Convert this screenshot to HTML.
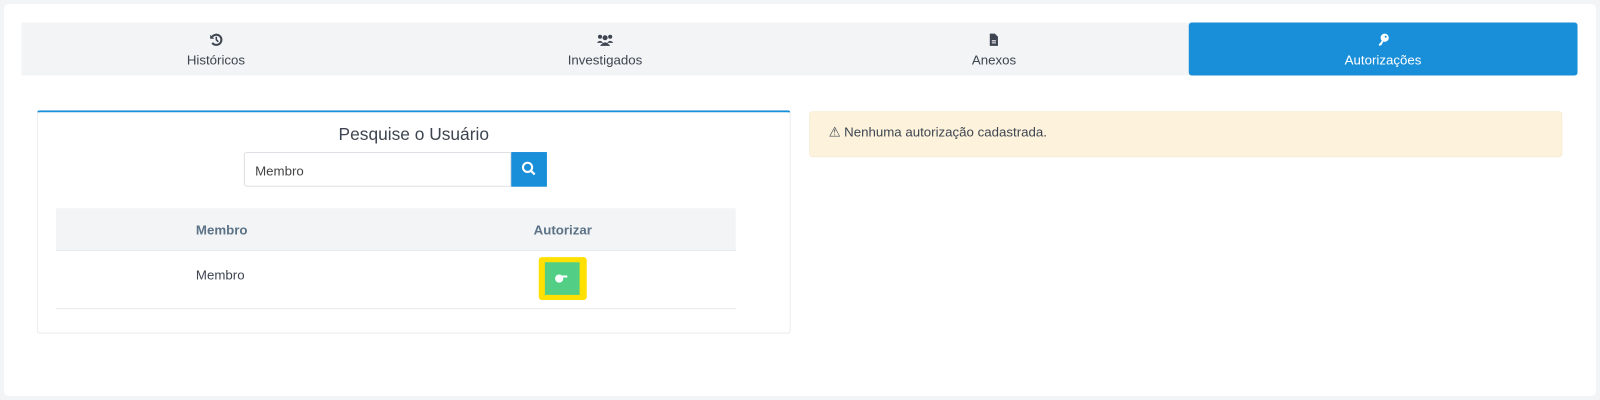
<!DOCTYPE html>
<html><head><meta charset="utf-8"><style>
*{box-sizing:border-box;margin:0;padding:0}
body{width:1600px;height:400px;background:#f3f4f6;font-family:"Liberation Sans",sans-serif;position:relative;overflow:hidden}
#w{position:absolute;left:0;top:0;width:1568px;height:392px;transform:scale(1.0204);transform-origin:0 0}
.card{position:absolute;left:4px;top:4px;width:1560px;height:384px;background:#fff;border-radius:4px}
.tabs{position:absolute;left:21px;top:22px;width:1525px;height:52px;background:#f3f4f6;display:flex}
.tab{flex:1;text-align:center;font-size:13px;color:#3d4550;padding-top:10px;border-radius:3px}
.tab svg{display:block;margin:0 auto 5px}
.tab.act{background:#1a8fd9;color:#fff}
.left{position:absolute;left:36px;top:108px;width:739px;height:219px;border:1px solid #e6e8eb;border-top:2px solid #1a8fd9;border-radius:3px}
h3{position:absolute;top:12px;width:100%;text-align:center;font-weight:normal;font-size:17px;color:#3d4550}
.inp{position:absolute;left:202px;top:39px;width:262px;height:34px;border:1px solid #dde0e4;border-radius:3px 0 0 3px;font-size:13px;color:#444;padding:10px 10px}
.btn{position:absolute;left:464px;top:39px;width:35px;height:34px;background:#1a8fd9}
.thead{position:absolute;left:18px;top:94px;width:666px;height:42px;background:#f3f4f6;border-bottom:1px solid #e6e8eb;font-size:13px;font-weight:bold;color:#5b7287}
.row{position:absolute;left:18px;top:136px;width:666px;height:57px;border-bottom:1px solid #e6e8eb;font-size:13px;color:#3d4550}
.alert{position:absolute;left:793px;top:109px;width:738px;height:45px;background:#fdf3dc;border:1px solid #f7ecd2;border-radius:3px;font-size:13px;color:#3d4550;padding:12px 18px}
</style></head><body><div id="w">
<div class="card"></div>
<div class="tabs">
<div class="tab"><svg width="14" height="14" viewBox="0 0 14 14"><path d="M3 4A5 5 0 1 1 3 10" fill="none" stroke="#3d4550" stroke-width="2"/><path d="M1 2v4h4z" fill="#3d4550"/><path d="M7 4v3l2 2" fill="none" stroke="#3d4550" stroke-width="1.5"/></svg>Históricos</div>
<div class="tab"><svg width="18" height="14" viewBox="0 0 18 14"><circle cx="4" cy="4" r="2" fill="#3d4550"/><circle cx="14" cy="4" r="2" fill="#3d4550"/><circle cx="9" cy="5" r="2.5" fill="#3d4550"/><path d="M1 10q3-4 6 0zM11 10q3-4 6 0zM4 13q5-7 10 0z" fill="#3d4550"/></svg>Investigados</div>
<div class="tab"><svg width="12" height="14" viewBox="0 0 12 14"><path d="M2 1h5l3 3v9H2z" fill="#3d4550"/><path d="M4 8h4M4 10h4" stroke="#fff"/></svg>Anexos</div>
<div class="tab act"><svg width="14" height="14" viewBox="0 0 14 14"><circle cx="9" cy="5" r="4" fill="#fff"/><path d="M7 7L3 12l1 1 2-1 2-4z" fill="#fff"/><circle cx="10" cy="4" r="1" fill="#1a8fd9"/></svg>Autorizações</div>
</div>
<div class="left">
<h3>Pesquise o Usuário</h3>
<div class="inp">Membro</div>
<div class="btn"><svg width="35" height="34" viewBox="0 0 35 34"><circle cx="16" cy="15" r="4.5" fill="none" stroke="#fff" stroke-width="2"/><path d="M19 18l4 4" stroke="#fff" stroke-width="2.2"/></svg></div>
<div class="thead"><span style="position:absolute;left:137px;top:14px">Membro</span><span style="position:absolute;left:468px;top:14px">Autorizar</span></div>
<div class="row"><span style="position:absolute;left:137px;top:16px">Membro</span>
<div style="position:absolute;left:473px;top:6px;width:47px;height:42px;background:#ffe000;border-radius:3px"><div style="position:absolute;left:6px;top:5px;width:34px;height:32px;background:#52cf85"><svg width="34" height="32" viewBox="0 0 34 32"><circle cx="14" cy="16" r="4" fill="#fff"/><path d="M15 13h7v2h-7z" fill="#fff"/></svg></div></div></div>
</div>
<div class="alert">⚠ Nenhuma autorização cadastrada.</div>
</div></body></html>
